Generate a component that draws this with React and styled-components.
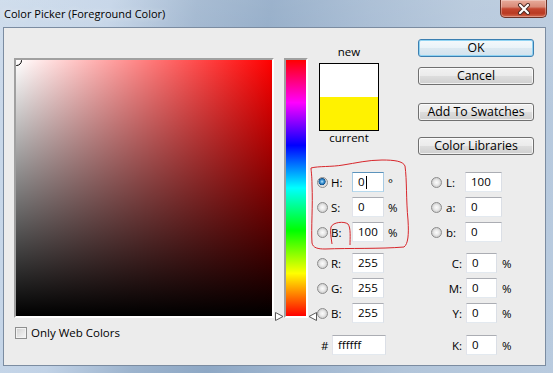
import React from "react";
import styled, { createGlobalStyle, css } from "styled-components";

const Global = createGlobalStyle`
  html, body { margin: 0; padding: 0; background: #fff; }
  body {
    font-family: "Open Sans", "Noto Sans", sans-serif;
    font-size: 11.5px;
    color: #000;
  }
`;

const Window = styled.div`
  position: relative;
  width: 553px;
  height: 373px;
  display: flex;
  flex-direction: column;
  overflow: hidden;
  background:
    linear-gradient(180deg, rgba(255,255,255,0.12) 0%, rgba(255,255,255,0) 30%),
    linear-gradient(100deg, #cad9ea 0%, #c1d2e6 18%, #9cb3cd 32%, #8ea8c5 44%, #a2b8d1 60%, #b2c5da 76%, #b9cbdf 100%);
`;

const TitleBar = styled.div`
  height: 27px;
  flex: none;
  display: flex;
  justify-content: space-between;
  align-items: flex-start;
  padding: 0 6px 0 4px;
  box-sizing: border-box;
`;

const TitleText = styled.div`
  font-size: 11px;
  line-height: 15px;
  padding-top: 6px;
  color: #000;
  text-shadow: 0 0 6px rgba(255, 255, 255, 0.8);
`;

const CloseButton = styled.div`
  width: 47px;
  height: 18px;
  box-sizing: border-box;
  border: 1px solid #6b3328;
  border-top: none;
  border-radius: 0 0 5px 5px;
  background: linear-gradient(180deg, #e8ab9b 0%, #d98b78 40%, #c4462f 52%, #b93a22 78%, #d46a4f 100%);
  box-shadow: inset 0 0 0 1px rgba(255, 255, 255, 0.3);
  display: flex;
  align-items: center;
  justify-content: center;
`;

const Client = styled.div`
  flex: 1;
  margin: 0 7px 7px 3px;
  border: 1px solid #7b8ca1;
  background: #ececec;
  display: flex;
  align-items: flex-start;
`;

const PickerColumn = styled.div`
  padding: 30px 0 0 10px;
  display: flex;
  flex-direction: column;
`;

const Sunken = css`
  border: 2px solid;
  border-color: #a0a0a0 #ffffff #ffffff #a0a0a0;
`;

const ColorField = styled.div`
  ${Sunken};
  position: relative;
  width: 256px;
  height: 256px;
  overflow: hidden;
  background:
    linear-gradient(to top, #000 0%, rgba(0,0,0,0) 100%),
    linear-gradient(to right, #fff 0%, #f00 100%);
`;

const Marker = styled.span`
  position: absolute;
  left: -5px;
  top: -5px;
  width: 11px;
  height: 11px;
  box-sizing: border-box;
  border-radius: 50%;
  border: 1px solid #000;
`;

const CheckRow = styled.label`
  margin-top: 7px;
  display: flex;
  align-items: center;
  gap: 4px;
  line-height: 15px;
`;

const Checkbox = styled.span`
  width: 12px;
  height: 12px;
  margin-left: 1px;
  box-sizing: border-box;
  border: 1px solid #8e8f8f;
  background: linear-gradient(135deg, #cfcfcf 0%, #e4e4e4 50%, #f7f7f7 100%);
  box-shadow: inset 0 0 0 1px #f3f3f3;
`;

const HueColumn = styled.div`
  position: relative;
  margin-top: 30px;
  padding: 0 8px 0 10px;
`;

const HueBar = styled.div`
  ${Sunken};
  width: 20px;
  height: 256px;
  background: linear-gradient(to bottom,
    #f00 0%, #f0f 16.66%, #00f 33.33%, #0ff 50%, #0f0 66.66%, #ff0 83.33%, #f00 100%);
`;

const Arrow = styled.svg`
  position: absolute;
  top: 254px;
  left: ${(p) => (p.$side === "left" ? "1px" : "34px")};
  width: 9px;
  height: 9px;
`;

const Controls = styled.div`
  display: flex;
  flex-direction: column;
  width: 229px;
`;

const TopRow = styled.div`
  display: flex;
  align-items: flex-start;
`;

const SwatchBlock = styled.div`
  width: 66px;
  padding-top: 17px;
  display: flex;
  flex-direction: column;
  align-items: center;
`;

const SwatchLabel = styled.div`
  line-height: 14px;
`;

const Swatch = styled.div`
  width: 60px;
  height: 68px;
  margin: 4px 0 0 0;
  box-sizing: border-box;
  border: 1px solid #000;
  background: linear-gradient(#fff 0%, #fff 50%, #fff200 50%, #fff200 100%);
`;

const ButtonStack = styled.div`
  margin-left: 36px;
  padding-top: 11px;
  width: 116px;
  display: flex;
  flex-direction: column;
`;

const Button = styled.div`
  height: 18px;
  margin-top: ${(p) => p.$gap || 0}px;
  box-sizing: border-box;
  border: 1px solid #707070;
  border-radius: 3px;
  background: linear-gradient(180deg, #f2f2f2 0%, #ebebeb 48%, #dddddd 52%, #cfcfcf 100%);
  box-shadow: inset 0 0 0 1px rgba(255, 255, 255, 0.7);
  font-size: 12.3px;
  line-height: 15px;
  text-align: center;
  ${(p) =>
    p.$primary &&
    css`
      border-color: #3c7fb1;
      background: linear-gradient(180deg, #f4f9fc 0%, #eaf3f8 48%, #dce9f1 52%, #d3e3ee 100%);
      box-shadow: inset 0 0 0 1px #8fd3f2;
    `}
`;

const FieldsArea = styled.div`
  margin-top: 17px;
  display: flex;
`;

const FieldCol = styled.div`
  width: ${(p) => p.$width}px;
  display: flex;
  flex-direction: column;
`;

const Group = styled.div`
  display: flex;
  flex-direction: column;
  gap: 5px;
  margin-top: ${(p) => p.$gap || 0}px;
`;

const Row = styled.div`
  display: flex;
  align-items: center;
  height: 20px;
`;

const Radio = styled.span`
  flex: none;
  width: 11px;
  height: 11px;
  margin: 0 1px 0 1px;
  box-sizing: border-box;
  border-radius: 50%;
  border: 1px solid #8d8d8d;
  background: radial-gradient(circle at 50% 50%, #fbfbfb 0%, #ececec 35%, #cdcdcd 75%, #e2e2e2 100%);
  ${(p) =>
    p.$checked &&
    css`
      background: radial-gradient(circle at 45% 40%, #c6e7fc 0px, #4aa0dc 1.5px, #1f6fae 2.7px, #13508a 3.3px, #d8d8d8 3.8px, #f2f2f2 100%);
    `}
`;

const Spacer = styled.span`
  flex: none;
  width: 13px;
`;

const Label = styled.span`
  flex: none;
  width: ${(p) => p.$w}px;
  box-sizing: border-box;
  padding-left: ${(p) => (p.$right ? 0 : p.$pad ?? 2)}px;
  padding-right: ${(p) => (p.$right ? 4 : 0)}px;
  text-align: ${(p) => (p.$right ? "right" : "left")};
  line-height: 15px;
`;

const Input = styled.div`
  flex: none;
  width: ${(p) => p.$w}px;
  height: 20px;
  box-sizing: border-box;
  border: 1px solid;
  border-color: #abadb3 #dbdfe6 #e3e9ef #e2e3ea;
  background: #fff;
  padding-left: 5px;
  line-height: 18px;
  display: flex;
  align-items: center;
  ${(p) =>
    p.$focus &&
    css`
      border-color: #5c93bc #a9cbe3 #b7d9ed #a9cbe3;
    `}
`;

const Caret = styled.span`
  display: inline-block;
  width: 1px;
  height: 13px;
  margin-left: 1px;
  background: #000;
`;

const Unit = styled.span`
  margin-left: ${(p) => p.$gap || 4}px;
  line-height: 15px;
`;

const Annotation = styled.svg`
  position: absolute;
  left: 0;
  top: 0;
  width: 553px;
  height: 373px;
  pointer-events: none;
`;

function RadioRow({ label, value, unit, checked, labelW, pad, inputW, focus }) {
  return (
    <Row>
      <Radio $checked={checked} />
      <Label $w={labelW} $pad={pad}>{label}</Label>
      <Input $w={inputW} $focus={focus}>
        {value}
        {focus && <Caret />}
      </Input>
      {unit && <Unit>{unit}</Unit>}
    </Row>
  );
}

function CmykRow({ label, value }) {
  return (
    <Row>
      <Spacer />
      <Label $w={23} $right>{label}</Label>
      <Input $w={31}>{value}</Input>
      <Unit $gap={5}>%</Unit>
    </Row>
  );
}

export default function App() {
  return (
    <>
      <Global />
      <Window>
        <TitleBar>
          <TitleText>Color Picker (Foreground Color)</TitleText>
          <CloseButton>
            <svg width="14" height="12" viewBox="0 0 14 12">
              <path d="M3 2 L11 10 M11 2 L3 10" stroke="#4a2a24" strokeWidth="4" strokeLinecap="round" />
              <path d="M3 2 L11 10 M11 2 L3 10" stroke="#ffffff" strokeWidth="2.2" strokeLinecap="round" />
            </svg>
          </CloseButton>
        </TitleBar>
        <Client>
          <PickerColumn>
            <ColorField>
              <Marker />
            </ColorField>
            <CheckRow>
              <Checkbox />
              <span>Only Web Colors</span>
            </CheckRow>
          </PickerColumn>
          <HueColumn>
            <HueBar />
            <Arrow $side="left" viewBox="0 0 9 9">
              <polygon points="0.5,0.5 8,4.5 0.5,8.5" fill="#fff" stroke="#5a5a5a" strokeWidth="1" />
            </Arrow>
            <Arrow $side="right" viewBox="0 0 9 9">
              <polygon points="8.5,0.5 1,4.5 8.5,8.5" fill="#fff" stroke="#5a5a5a" strokeWidth="1" />
            </Arrow>
          </HueColumn>
          <Controls>
            <TopRow>
              <SwatchBlock>
                <SwatchLabel>new</SwatchLabel>
                <Swatch />
                <SwatchLabel>current</SwatchLabel>
              </SwatchBlock>
              <ButtonStack>
                <Button $primary>OK</Button>
                <Button $gap={10}>Cancel</Button>
                <Button $gap={18}>Add To Swatches</Button>
                <Button $gap={16}>Color Libraries</Button>
              </ButtonStack>
            </TopRow>
            <FieldsArea>
              <FieldCol $width={114}>
                <Group>
                  <RadioRow label="H:" value="0" unit="°" checked labelW={23} inputW={32} focus />
                  <RadioRow label="S:" value="0" unit="%" labelW={23} inputW={32} />
                  <RadioRow label="B:" value="100" unit="%" labelW={23} inputW={32} />
                </Group>
                <Group $gap={11}>
                  <RadioRow label="R:" value="255" labelW={23} inputW={32} />
                  <RadioRow label="G:" value="255" labelW={23} inputW={32} />
                  <RadioRow label="B:" value="255" labelW={23} inputW={32} />
                </Group>
                <Group $gap={12}>
                  <Row>
                    <Label $w={16} $pad={5}>#</Label>
                    <Input $w={54}>ffffff</Input>
                  </Row>
                </Group>
              </FieldCol>
              <FieldCol $width={115}>
                <Group>
                  <RadioRow label="L:" value="100" labelW={22} pad={3} inputW={37} />
                  <RadioRow label="a:" value="0" labelW={22} pad={3} inputW={37} />
                  <RadioRow label="b:" value="0" labelW={22} pad={3} inputW={37} />
                </Group>
                <Group $gap={11}>
                  <CmykRow label="C:" value="0" />
                  <CmykRow label="M:" value="0" />
                  <CmykRow label="Y:" value="0" />
                </Group>
                <Group $gap={12}>
                  <CmykRow label="K:" value="0" />
                </Group>
              </FieldCol>
            </FieldsArea>
          </Controls>
        </Client>
        <Annotation viewBox="0 0 553 373">
          <path
            d="M311,168 C318,166 332,167 343,165 C356,163 368,160 382,160 C394,160 403,161 405,166 C407,180 406,200 408,220 C409,235 408,244 404,247 C380,249 350,248 325,249 C318,249 313,248 312,243 C311,228 313,205 312,185 C312,176 311,170 311,168"
            fill="none"
            stroke="#d8262b"
            strokeWidth="1"
          />
          <path
            d="M332,244 C331,237 330,231 331,227 C333,222 344,221 348,224 C351,228 350,238 350,245"
            fill="none"
            stroke="#d8262b"
            strokeWidth="1"
          />
        </Annotation>
      </Window>
    </>
  );
}
